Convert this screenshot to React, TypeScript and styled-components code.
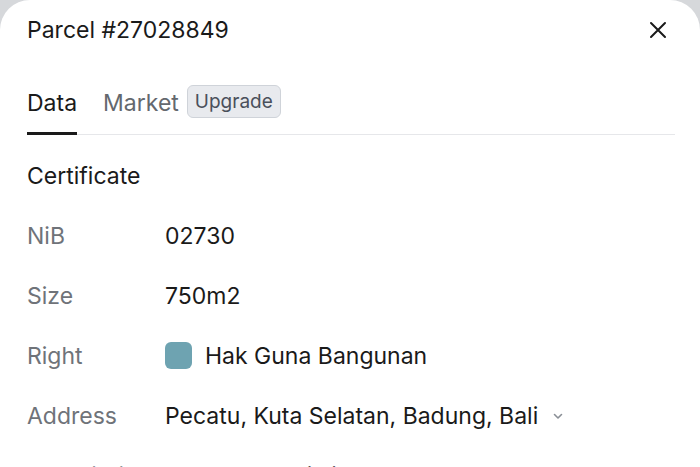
import styled, { createGlobalStyle } from "styled-components";

const Global = createGlobalStyle`
  html, body {
    margin: 0;
    padding: 0;
    background: #d6d8db;
    font-family: Inter, "Noto Sans", sans-serif;
    -webkit-font-smoothing: antialiased;
  }
  body {
    overflow: hidden;
  }
`;

const Panel = styled.div`
  width: 700px;
  height: 467px;
  box-sizing: border-box;
  background: #fff;
  border-radius: 30px 30px 0 0;
  padding: 14px 25px 0 27px;
  overflow: hidden;
`;

const Header = styled.div`
  display: flex;
  align-items: center;
  justify-content: space-between;
  height: 32px;
`;

const Title = styled.h1`
  margin: 0;
  font-size: 23px;
  font-weight: 400;
  color: #1a1a1a;
`;

const CloseButton = styled.button`
  display: flex;
  align-items: center;
  justify-content: center;
  border: 0;
  background: none;
  padding: 0;
  margin-right: 7px;
  color: #1a1a1a;
  cursor: pointer;
`;

const Tabs = styled.div`
  display: flex;
  align-items: flex-end;
  gap: 26px;
  margin-top: 43px;
  border-bottom: 1.5px solid #e6e7ea;
`;

const Tab = styled.div<{ $active?: boolean }>`
  display: flex;
  align-items: center;
  gap: 8px;
  height: 46px;
  padding-bottom: 16px;
  box-sizing: border-box;
  margin-bottom: -1.5px;
  font-size: 23px;
  font-weight: 400;
  color: ${(p) => (p.$active ? "#1a1a1a" : "#64686e")};
  border-bottom: 3px solid ${(p) => (p.$active ? "#1a1a1a" : "transparent")};
`;

const Badge = styled.span`
  display: inline-flex;
  align-items: center;
  height: 33px;
  box-sizing: border-box;
  padding: 0 7px;
  border: 1px solid #cfd3d9;
  border-radius: 6px;
  background: #e8eaee;
  font-size: 19px;
  color: #4a505b;
  transform: translateY(-1px);
`;

const Section = styled.h2`
  margin: 0;
  height: 60px;
  display: flex;
  align-items: center;
  padding-top: 11px;
  font-size: 23px;
  font-weight: 400;
  color: #1a1a1a;
`;

const Row = styled.div`
  display: grid;
  grid-template-columns: 138px 1fr;
  align-items: center;
  height: 60px;
`;

const Label = styled.span`
  font-size: 23px;
  color: #6f7379;
`;

const Value = styled.span`
  display: flex;
  align-items: center;
  gap: 13px;
  font-size: 23px;
  color: #1a1a1a;
`;

const Swatch = styled.span<{ $color: string }>`
  width: 27px;
  height: 27px;
  border-radius: 6px;
  background: ${(p) => p.$color};
  flex-shrink: 0;
`;

const Chevron = styled.span`
  display: inline-flex;
  color: #8a8f96;
  margin-left: 1px;
`;

type Item = { label: string; value: string; swatch?: string; more?: boolean };

const rows: Item[] = [
  { label: "NiB", value: "02730" },
  { label: "Size", value: "750m2" },
  { label: "Right", value: "Hak Guna Bangunan", swatch: "#6ea3b1" },
  { label: "Address", value: "Pecatu, Kuta Selatan, Badung, Bali", more: true },
  { label: "Description", value: "Kawasan Pariwisata" },
];

export default function App() {
  return (
    <>
      <Global />
      <Panel>
        <Header>
          <Title>Parcel #27028849</Title>
          <CloseButton aria-label="Close">
            <svg width="20" height="20" viewBox="0 0 20 20" fill="none" stroke="currentColor" strokeWidth="2" strokeLinecap="round">
              <path d="M3 3l14 14M17 3L3 17" />
            </svg>
          </CloseButton>
        </Header>
        <Tabs>
          <Tab $active>Data</Tab>
          <Tab>
            Market
            <Badge>Upgrade</Badge>
          </Tab>
        </Tabs>
        <Section>Certificate</Section>
        {rows.map((r) => (
          <Row key={r.label}>
            <Label>{r.label}</Label>
            <Value>
              {r.swatch && <Swatch $color={r.swatch} />}
              {r.value}
              {r.more && (
                <Chevron>
                  <svg width="12" height="12" viewBox="0 0 12 12" fill="none" stroke="currentColor" strokeWidth="1.6" strokeLinecap="round" strokeLinejoin="round">
                    <path d="M2.5 4.5L6 8l3.5-3.5" />
                  </svg>
                </Chevron>
              )}
            </Value>
          </Row>
        ))}
      </Panel>
    </>
  );
}
